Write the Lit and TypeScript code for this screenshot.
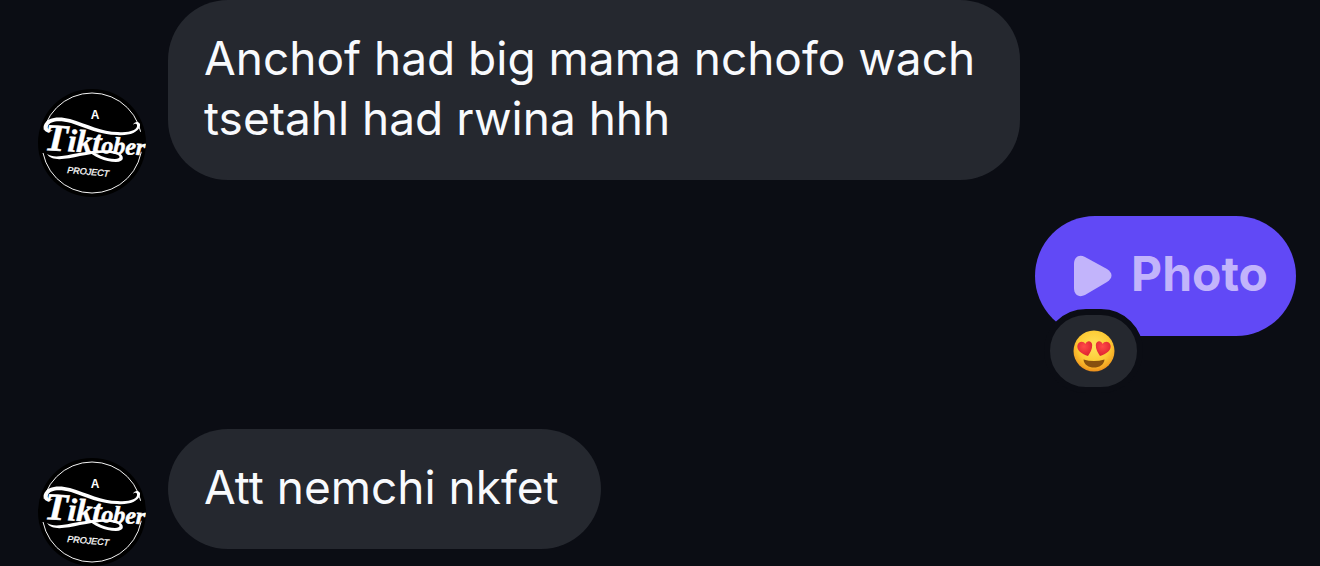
import { LitElement, html, css } from "lit";
import { customElement, property } from "lit/decorators.js";

@customElement("user-avatar")
class UserAvatar extends LitElement {
  static styles = css`
    :host {
      display: block;
      flex: none;
      width: 108px;
      height: 108px;
    }
    svg {
      display: block;
      width: 100%;
      height: 100%;
    }
    .sans {
      font-family: "Liberation Sans", Arial, sans-serif;
      fill: #fff;
    }
    .script {
      font-family: "Liberation Serif", "Times New Roman", serif;
      font-weight: 700;
      font-style: italic;
      fill: #fff;
      stroke: #fff;
      stroke-width: 0.5px;
    }
  `;

  render() {
    return html`
      <svg viewBox="0 0 108 108" role="img" aria-label="A Tiktober Project">
        <circle cx="54" cy="54" r="54" fill="#000" />
        <circle cx="54" cy="54" r="50" fill="none" stroke="#f4f4f4" stroke-width="1" />
        <path d="M3 42 L3 64 L14 64 L14 36 Z M95 44 L107 42 L107 62 L98 64 Z" fill="#000" />
        <text class="sans" x="57" y="30" font-size="12" font-weight="700" text-anchor="middle">A</text>
        <text class="script" x="6" y="61" transform="rotate(3 6 61)"><tspan font-size="38">T</tspan><tspan font-size="32">ikt</tspan><tspan font-size="24">ober</tspan></text>
        <path
          d="M15 41 C9 46 4 41 6 36 C9 28 21 27 32 30 C49 35 64 43 80 43 C91 44 100 41 99 36 C98 34 96 35 95 36 C97 31 103 33 102 37 C100 44 90 47 79 46 C63 46 48 39 33 34 C21 31 12 32 10 37 C9 41 12 42 15 41 Z"
          fill="#fff"
        />
        <path
          d="M9 65 C16 70 29 66 41 64 C57 61 71 60 79 63 C87 66 87 73 78 73 C67 73 56 68 48 60 C59 65 68 70 77 70 C83 70 83 66 77 65 C67 62 54 65 42 67 C28 70 14 73 9 65 Z"
          fill="#fff"
        />
        <text class="sans" x="29" y="84" font-size="9" font-style="italic" stroke="#fff" stroke-width="0.3" transform="rotate(5 29 84)">PROJECT</text>
      </svg>
    `;
  }
}

@customElement("incoming-message")
class IncomingMessage extends LitElement {
  @property() text = "";

  static styles = css`
    :host {
      display: flex;
      align-items: flex-end;
      gap: 22px;
      padding-left: 38px;
    }
    .lane {
      flex: 1;
      min-width: 0;
      display: flex;
      padding-bottom: 17px;
    }
    .bubble {
      box-sizing: border-box;
      max-width: 74%;
      margin: 0;
      padding: 28px 42px 32px 36px;
      border-radius: 60px;
      background: #25282f;
      color: #f8fafd;
      font-size: 46px;
      line-height: 60px;
    }
  `;

  render() {
    return html`
      <user-avatar></user-avatar>
      <div class="lane"><p class="bubble">${this.text}</p></div>
    `;
  }
}

@customElement("photo-message")
class PhotoMessage extends LitElement {
  static styles = css`
    :host {
      display: flex;
      justify-content: flex-end;
      padding: 0 24px 51px 0;
    }
    .wrap {
      position: relative;
    }
    .photo {
      display: flex;
      align-items: center;
      gap: 18px;
      padding: 28px 28px 32px 36px;
      border: 0;
      border-radius: 60px;
      background: #6149f6;
      color: #c2b4fb;
      font: 700 48px/60px Inter, sans-serif;
    }
    .play {
      display: block;
      width: 42px;
      height: 44px;
      margin-top: 4px;
    }
    .reaction {
      position: absolute;
      left: 9px;
      bottom: -57px;
      display: flex;
      align-items: center;
      justify-content: center;
      width: 99px;
      height: 84px;
      padding: 0;
      border: 6px solid #0b0d14;
      border-radius: 44px;
      background: #25282f;
    }
    .emoji {
      display: block;
      width: 42px;
      height: 42px;
    }
  `;

  render() {
    return html`
      <div class="wrap">
        <button class="photo" type="button">
          <svg class="play" viewBox="0 0 42 44" aria-hidden="true">
            <path
              d="M3 10 C3 3 8 0 14 3 L36 15 C42 19 42 24 36 28 L14 41 C8 44 3 41 3 34 Z"
              fill="currentColor"
            />
          </svg>
          <span>Photo</span>
        </button>
        <button class="reaction" type="button" aria-label="Heart eyes reaction">
          <svg class="emoji" viewBox="0 0 42 42" aria-hidden="true">
            <defs>
              <radialGradient id="face" cx="0.5" cy="0.38" r="0.64">
                <stop offset="0" stop-color="#ffe25c" />
                <stop offset="0.6" stop-color="#fdcb35" />
                <stop offset="0.86" stop-color="#f5a623" />
                <stop offset="1" stop-color="#e5841a" />
              </radialGradient>
              <radialGradient id="heart" cx="0.45" cy="0.35" r="0.7">
                <stop offset="0" stop-color="#ff4a48" />
                <stop offset="1" stop-color="#dc1f2e" />
              </radialGradient>
            </defs>
            <circle cx="21" cy="21" r="20.5" fill="url(#face)" />
            <path
              d="M15 26 C9 24 3 20 4.500 15 C6 10.500 11 11 12.300 14 C14 10 18.800 10.500 19.200 15 C19.400 19 17 23 15 26 Z"
              fill="url(#heart)"
            />
            <path
              d="M27 26 C33 24 39 20 37.500 15 C36 10.500 31 11 29.700 14 C28 10 23.200 10.500 22.800 15 C22.600 19 25 23 27 26 Z"
              fill="url(#heart)"
            />
            <path d="M10.500 29.500 Q21 32.500 31.500 29.500 C31 35 26 37.500 21 37.500 C16 37.500 11 35 10.500 29.500 Z" fill="#87500f" />
          </svg>
        </button>
      </div>
    `;
  }
}

@customElement("app-root")
class AppRoot extends LitElement {
  static styles = css`
    :host {
      display: block;
      min-height: 100vh;
      background: #0b0d14;
      font-family: Inter, sans-serif;
    }
    .thread {
      display: flex;
      flex-direction: column;
    }
    .sent {
      margin: 19px 0 42px;
    }
  `;

  render() {
    return html`
      <main class="thread">
        <incoming-message text="Anchof had big mama nchofo wach tsetahl had rwina hhh"></incoming-message>
        <photo-message class="sent"></photo-message>
        <incoming-message text="Att nemchi nkfet"></incoming-message>
      </main>
    `;
  }
}
